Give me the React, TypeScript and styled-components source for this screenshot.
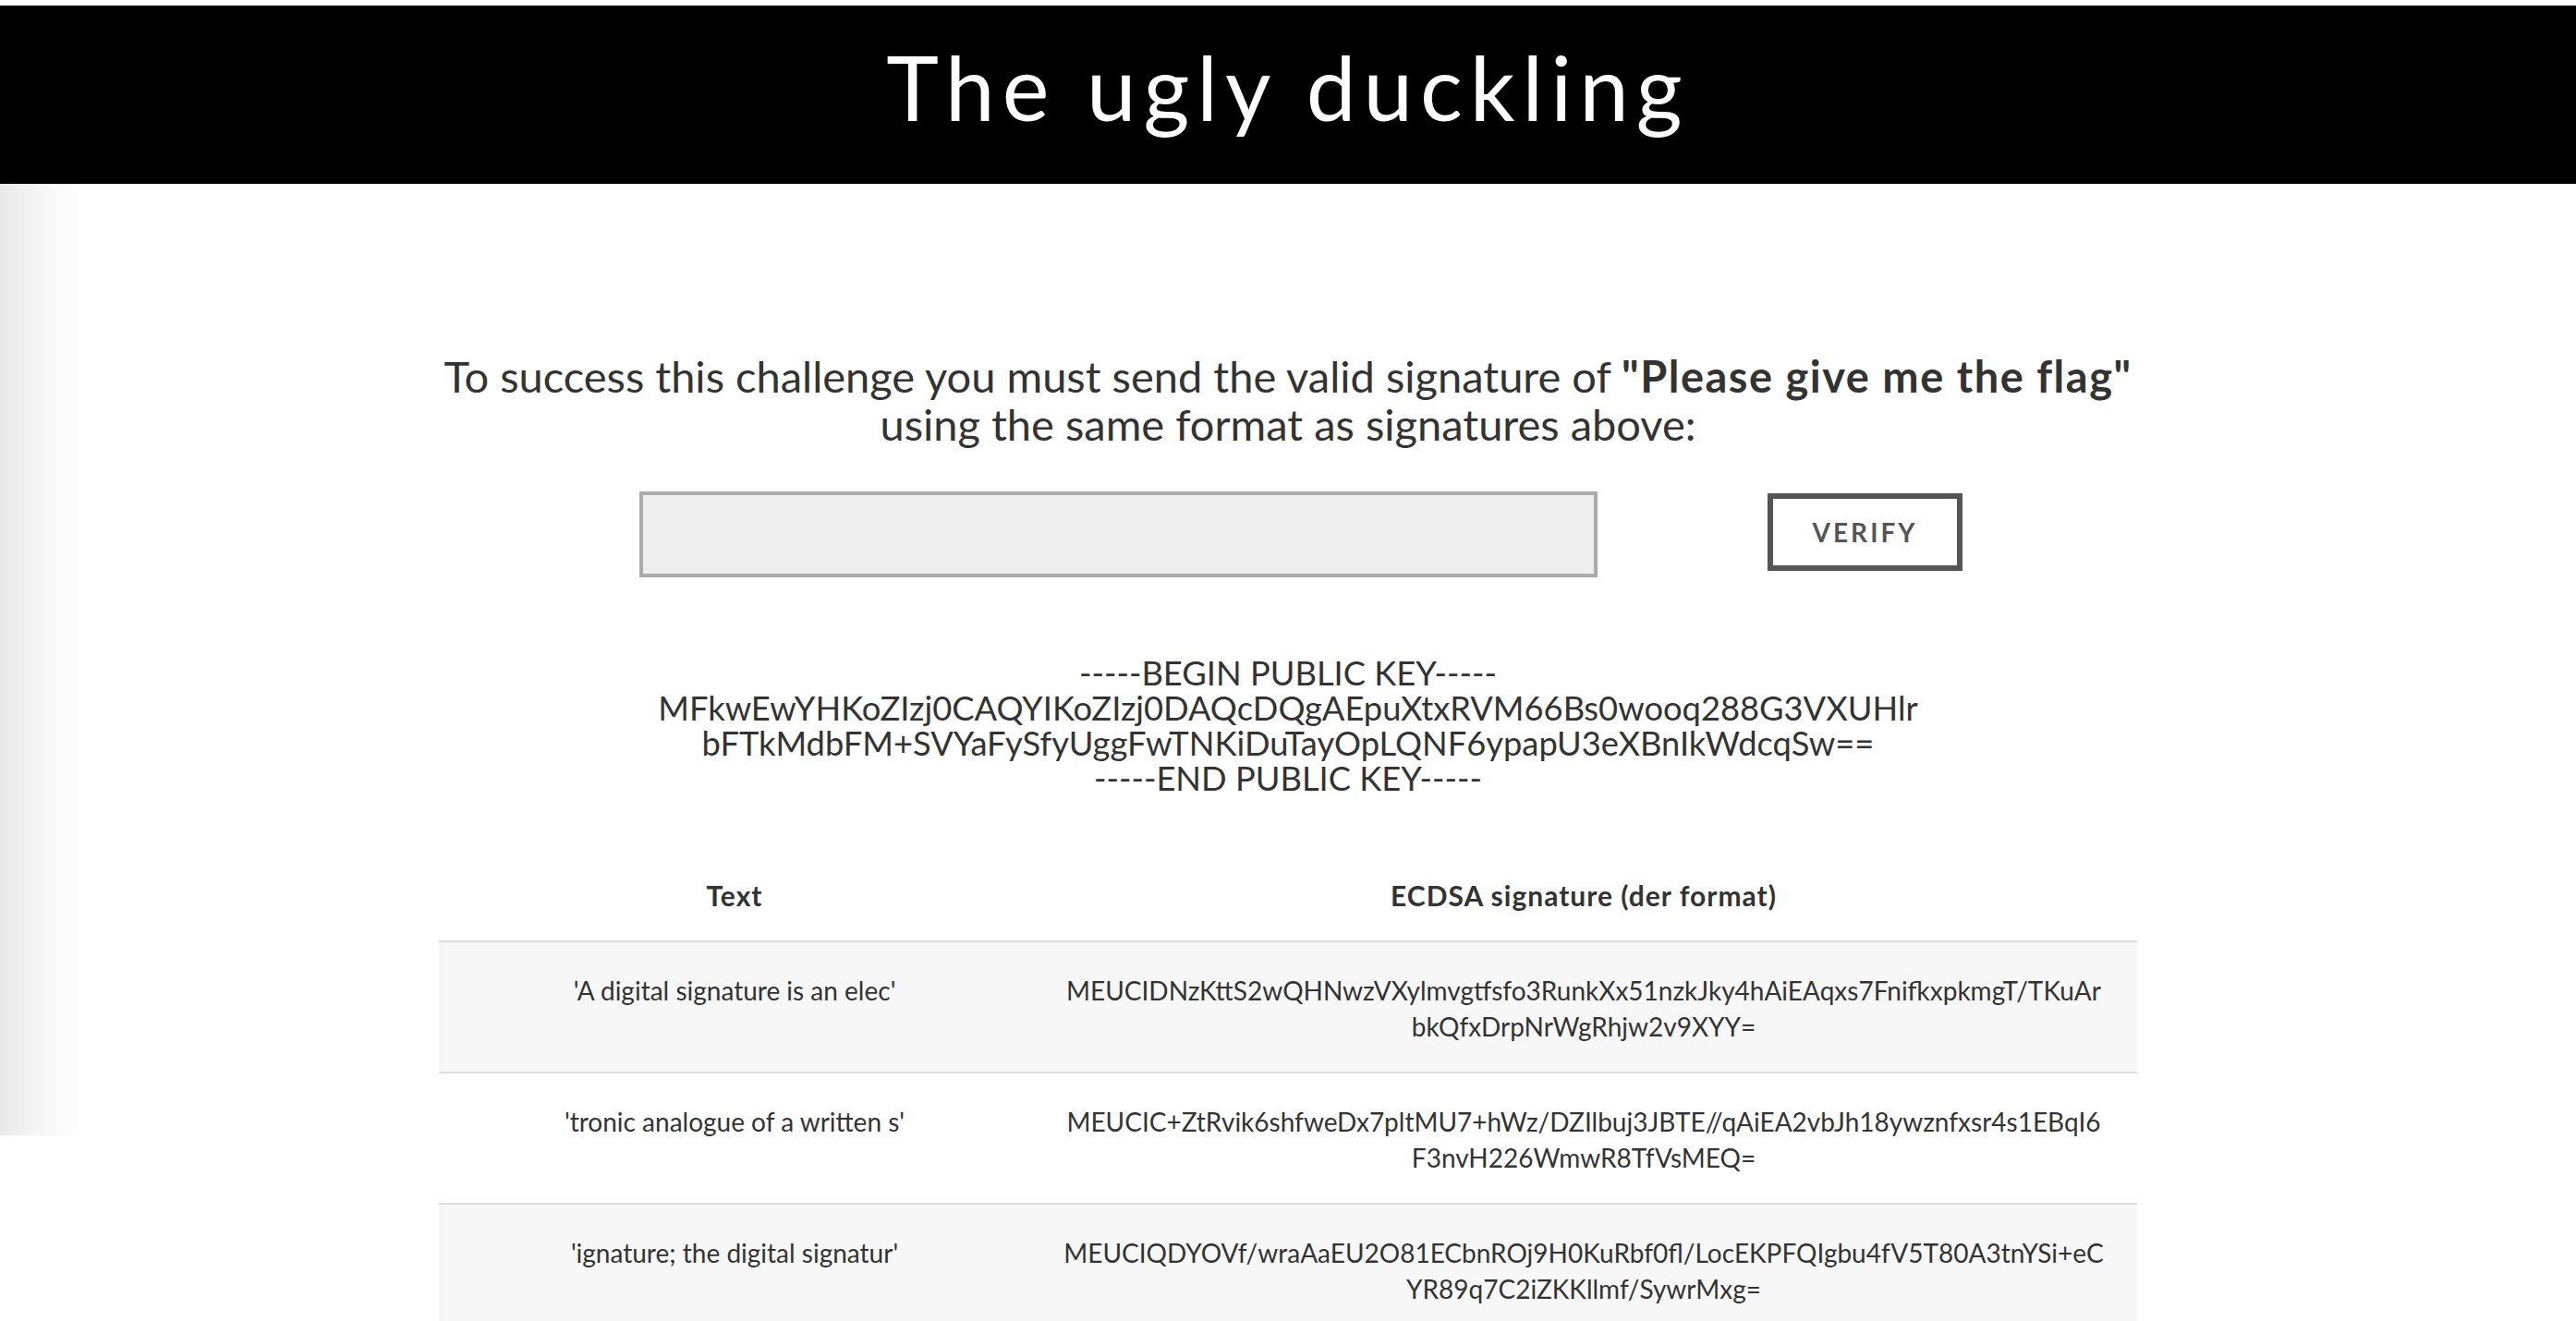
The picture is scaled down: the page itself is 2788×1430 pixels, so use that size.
import React from 'react';
import styled, { createGlobalStyle } from 'styled-components';

const GlobalStyle = createGlobalStyle`
  html, body {
    margin: 0;
    padding: 0;
    background: #fff;
  }
  body {
    font-family: Lato, "Open Sans", "Liberation Sans", sans-serif;
    color: #333;
  }
`;

const Page = styled.div`
  padding-top: 6px;
`;

const Header = styled.header`
  height: 193px;
  box-sizing: border-box;
  padding-bottom: 18px;
  background: #000;
  display: flex;
  align-items: center;
  justify-content: center;
`;

const Title = styled.h1`
  margin: 0;
  font-family: Lato, "Open Sans", sans-serif;
  font-weight: 400;
  font-size: 96px;
  letter-spacing: 8px;
  color: #fff;
`;

const Main = styled.main`
  background-image: linear-gradient(to right, #e9e9e9 0, #f5f5f5 40px, #fff 90px);
  background-repeat: no-repeat;
  background-size: 92px 1030px;
  display: flex;
  flex-direction: column;
  align-items: center;
  padding-top: 182px;
`;

const Container = styled.div`
  width: 1838px;
  display: flex;
  flex-direction: column;
  align-items: center;
`;

const Lead = styled.p`
  margin: 0;
  font-size: 47px;
  line-height: 52px;
  text-align: center;
  color: #333;

  b {
    font-weight: 700;
    letter-spacing: 1.5px;
  }
`;

const Form = styled.form`
  display: grid;
  grid-template-columns: 1037px 211px;
  column-gap: 184px;
  align-items: center;
  justify-content: center;
  padding-left: 28px;
  margin-top: 47px;
`;

const SignatureInput = styled.input`
  box-sizing: border-box;
  width: 100%;
  height: 93px;
  border: 4px solid #ababab;
  background: #eee;
  outline: none;
  font: inherit;
  font-size: 28px;
  padding: 0 20px;
`;

const VerifyButton = styled.button`
  box-sizing: border-box;
  width: 211px;
  height: 84px;
  border: 6px solid #555;
  background: #fff;
  color: #555;
  font-family: Lato, sans-serif;
  font-weight: 700;
  font-size: 28px;
  letter-spacing: 3px;
  text-transform: uppercase;
  cursor: pointer;
  margin-top: -5px;
`;

const PublicKey = styled.pre`
  margin: 84px 0 0;
  font-family: Lato, sans-serif;
  font-size: 36.3px;
  line-height: 38px;
  text-align: center;
  color: #333;
  white-space: pre;
`;

const Table = styled.table`
  width: 100%;
  margin-top: 36px;
  border-collapse: collapse;
  table-layout: fixed;
`;

const Th = styled.th<{ $w?: number }>`
  width: ${({ $w }) => ($w ? `${$w}px` : 'auto')};
  height: 122px;
  box-sizing: border-box;
  padding: 0 0 31px;
  font-size: 30px;
  line-height: 36px;
  letter-spacing: 1px;
  font-weight: 700;
  text-align: center;
  vertical-align: bottom;
  border-bottom: 2px solid #ddd;
`;

const Row = styled.tr<{ $striped: boolean }>`
  background: ${({ $striped }) => ($striped ? '#f7f7f7' : '#fff')};
  border-top: 2px solid #ddd;
`;

const Td = styled.td`
  height: 142px;
  box-sizing: border-box;
  padding: 33px 33px 0;
  font-size: 28px;
  line-height: 39px;
  text-align: center;
  vertical-align: top;
  word-break: break-all;
`;

const rows = [
  {
    text: "'A digital signature is an elec'",
    sig: 'MEUCIDNzKttS2wQHNwzVXylmvgtfsfo3RunkXx51nzkJky4hAiEAqxs7FnifkxpkmgT/TKuArbkQfxDrpNrWgRhjw2v9XYY=',
  },
  {
    text: "'tronic analogue of a written s'",
    sig: 'MEUCIC+ZtRvik6shfweDx7pltMU7+hWz/DZIlbuj3JBTE//qAiEA2vbJh18ywznfxsr4s1EBqI6F3nvH226WmwR8TfVsMEQ=',
  },
  {
    text: "'ignature; the digital signatur'",
    sig: 'MEUCIQDYOVf/wraAaEU2O81ECbnROj9H0KuRbf0fl/LocEKPFQIgbu4fV5T80A3tnYSi+eCYR89q7C2iZKKllmf/SywrMxg=',
  },
];

const publicKey = `-----BEGIN PUBLIC KEY-----
MFkwEwYHKoZIzj0CAQYIKoZIzj0DAQcDQgAEpuXtxRVM66Bs0wooq288G3VXUHlr
bFTkMdbFM+SVYaFySfyUggFwTNKiDuTayOpLQNF6ypapU3eXBnIkWdcqSw==
-----END PUBLIC KEY-----`;

export default function App() {
  return (
    <Page>
      <GlobalStyle />
      <Header>
        <Title>The ugly duckling</Title>
      </Header>
      <Main>
        <Container>
          <Lead>
            To success this challenge you must send the valid signature of{' '}
            <b>"Please give me the flag"</b>
            <br />
            using the same format as signatures above:
          </Lead>
          <Form onSubmit={(e) => e.preventDefault()}>
            <SignatureInput type="text" />
            <VerifyButton type="submit">Verify</VerifyButton>
          </Form>
          <PublicKey>{publicKey}</PublicKey>
          <Table>
            <thead>
              <tr>
                <Th $w={640}>Text</Th>
                <Th>ECDSA signature (der format)</Th>
              </tr>
            </thead>
            <tbody>
              {rows.map((r, i) => (
                <Row key={i} $striped={i % 2 === 0}>
                  <Td>{r.text}</Td>
                  <Td>{r.sig}</Td>
                </Row>
              ))}
            </tbody>
          </Table>
        </Container>
      </Main>
    </Page>
  );
}
